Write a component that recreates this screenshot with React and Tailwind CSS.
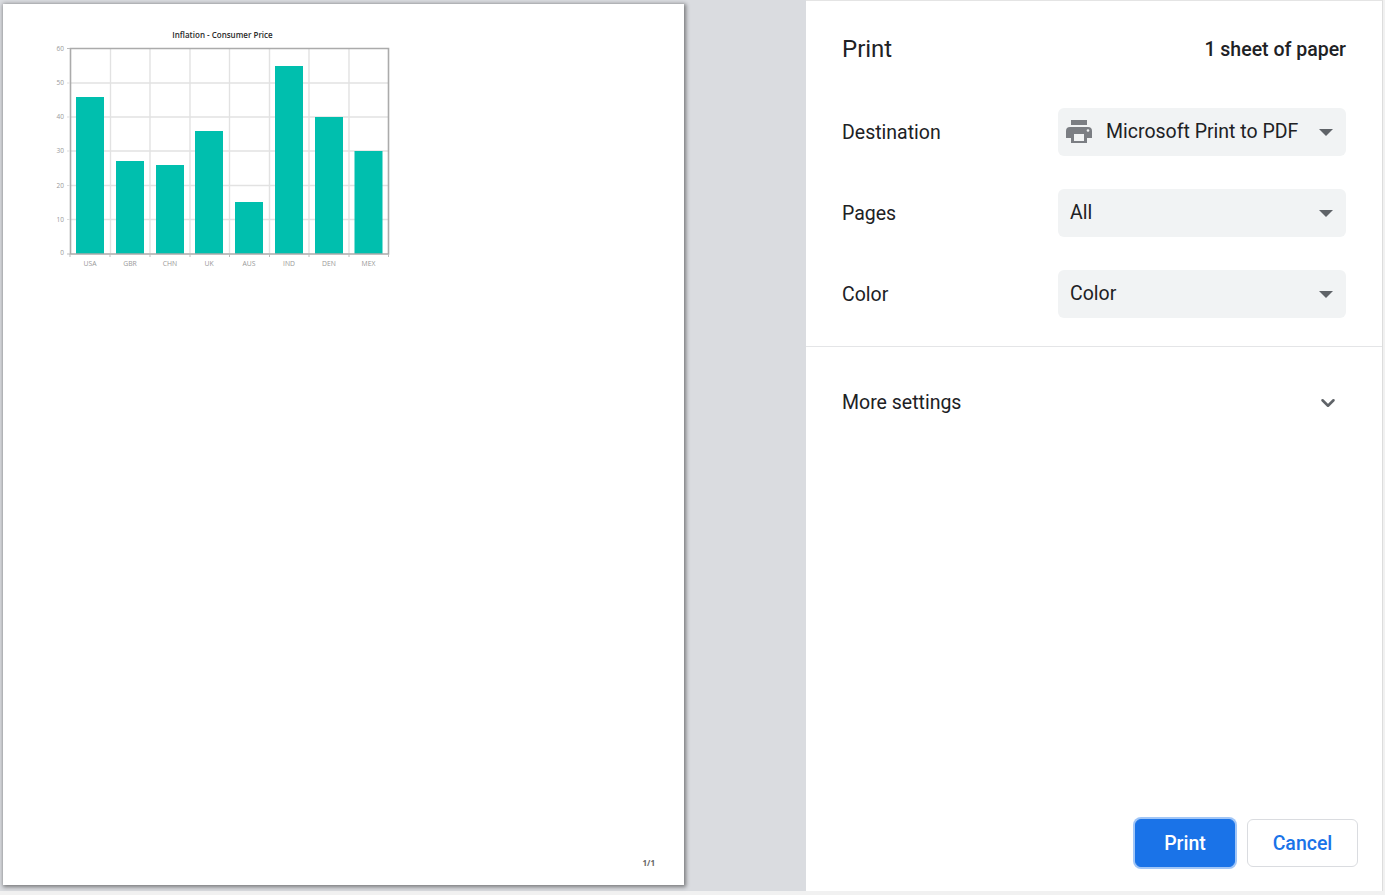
import { ChevronDown } from "lucide-react";

const bars = [
  { label: "USA", x: 76, top: 97 },
  { label: "GBR", x: 116, top: 161 },
  { label: "CHN", x: 156, top: 165 },
  { label: "UK", x: 195, top: 131 },
  { label: "AUS", x: 235, top: 202 },
  { label: "IND", x: 275, top: 66 },
  { label: "DEN", x: 315, top: 117 },
  { label: "MEX", x: 354.5, top: 151 },
];
const gridX = [110.5, 150, 190, 229.5, 269.5, 309, 349];
const gridY = [
  { v: 50, y: 83 },
  { v: 40, y: 117 },
  { v: 30, y: 151 },
  { v: 20, y: 185.5 },
  { v: 10, y: 219.5 },
];
const ticksX = [70, 110, 150, 190, 229.5, 269.5, 309, 349, 388.5];

const Chart = () => (
  <svg
    viewBox="40 20 360 260"
    width="360"
    height="260"
    className="ml-[37px] mt-[16px] block"
    style={{ fontFamily: '"Open Sans", sans-serif' }}
  >
    <text x="222.5" y="38" textAnchor="middle" fontSize="8" fontWeight="600" fill="#2a2a2a">
      Inflation - Consumer Price
    </text>
    {gridX.map((x) => (
      <line key={x} x1={x} x2={x} y1="48" y2="253" stroke="#e2e2e2" strokeWidth="1.4" />
    ))}
    {gridY.map((g) => (
      <line key={g.v} x1="70" x2="388" y1={g.y} y2={g.y} stroke="#e2e2e2" strokeWidth="1.4" />
    ))}
    {bars.map((b) => (
      <rect key={b.label} x={b.x} y={b.top} width="28" height={254 - b.top} fill="#00bfae" />
    ))}
    <path d="M70.500 48.500H388.500V254H70.500Z" fill="none" stroke="#ababab" strokeWidth="1.600" />
    <path d="M67 48.500H70M67 254H70" stroke="#bbb" />
    {gridY.map((g) => (
      <line key={g.v} x1="67" x2="70" y1={g.y} y2={g.y} stroke="#ddd" />
    ))}
    {ticksX.map((x) => (
      <line key={x} x1={x} x2={x} y1="254" y2="257" stroke="#bbb" />
    ))}
    {[{ v: 60, y: 48.5 }, ...gridY, { v: 0, y: 253 }].map((g) => (
      <text key={g.v} x="64" y={g.y + 2} textAnchor="end" fontSize="6.500" fill="#999">
        {g.v}
      </text>
    ))}
    {bars.map((b) => (
      <text key={b.label} x={b.x + 14} y="266" textAnchor="middle" fontSize="6.800" fill="#999">
        {b.label}
      </text>
    ))}
  </svg>
);

const PrinterIcon = () => (
  <svg viewBox="0 0 26 24" className="w-[26px] h-[24px] shrink-0" fill="#7b7e83">
    <path d="M5 0h16v5H5z" />
    <path d="M4 7h18a4 4 0 0 1 4 4v7h-5v5H5v-5H0v-7a4 4 0 0 1 4-4z" />
    <path d="M8 14h10v7H8z" fill="#f1f3f4" />
    <circle cx="22" cy="10.500" r="1.300" fill="#f1f3f4" />
  </svg>
);

const Caret = () => <div className="w-0 h-0 border-x-[7.500px] border-x-transparent border-t-[7.500px] border-t-[#5f6368]" />;

const SettingRow = ({ label, value, icon }) => (
  <div className="flex items-center justify-between h-[48px] mb-[33px]">
    <span className="text-[19.500px] text-[#202124] pt-[1px]">{label}</span>
    <div className={`w-[288px] h-[48px] rounded-[6px] bg-[#f1f3f4] flex items-center justify-between pr-[12px] ${icon ? "pl-[8px]" : "pl-[12px]"}`}>
      <div className="flex items-center gap-[14px]">
        {icon && <PrinterIcon />}
        <span className="text-[19.500px] text-[#202124] pb-[1px]">{value}</span>
      </div>
      <div className="mr-[1px]">
        <Caret />
      </div>
    </div>
  </div>
);

export default function App() {
  return (
    <div
      className="w-[1385px] h-[895px] overflow-hidden bg-[#f1f1f1] flex"
      style={{ fontFamily: "Roboto, sans-serif" }}
    >
      <div className="w-[1383px] h-[891px] flex">
        <div className="w-[806px] shrink-0 bg-[#dadce0] pt-[4px] pl-[3px]">
          <div className="w-[681px] h-[881px] bg-white shadow-[1px_1px_4px_1px_rgba(0,0,0,0.45)] flex flex-col justify-between">
            <Chart />
            <div className="self-end mr-[29px] mb-[16px] text-[8px] font-bold leading-[12px] text-[#666]" style={{ fontFamily: '"Open Sans", sans-serif' }}>
              1/1
            </div>
          </div>
        </div>
        <div className="w-[577px] bg-white border-t border-r border-t-[#e4e4e4] border-r-[#dddddd] flex flex-col">
          <div className="pl-[36px] pr-[36px] pt-[32px] flex items-center justify-between h-[63px]">
            <span className="text-[24px] text-[#202124]">Print</span>
            <span className="text-[19.500px] font-medium text-[#202124] pt-[2px]">1 sheet of paper</span>
          </div>
          <div className="pl-[36px] pr-[36px] pt-[44px]">
            <SettingRow label="Destination" value="Microsoft Print to PDF" icon />
            <SettingRow label="Pages" value="All" />
            <SettingRow label="Color" value="Color" />
          </div>
          <div className="h-px bg-[#e4e5e7] -mt-[5px]" />
          <div className="pl-[36px] pr-[43px] mt-[32px] flex items-center justify-between h-[48px]">
            <span className="text-[19.500px] text-[#202124]">More settings</span>
            <ChevronDown className="w-[22px] h-[22px] -mt-[1px] text-[#5f6368]" strokeWidth={2.8} />
          </div>
          <div className="mt-auto flex justify-end gap-[12px] pr-[24px] pb-[24px]">
            <button className="w-[100px] h-[48px] pt-[1px] rounded-[6px] bg-[#1a73e8] text-white text-[19.500px] font-medium ring-2 ring-[#a1c6f7] border border-[#1a73e8]">
              Print
            </button>
            <button className="w-[111px] h-[48px] pt-[1px] rounded-[6px] bg-white text-[#1a73e8] text-[19.500px] font-medium border border-[#dadce0]">
              Cancel
            </button>
          </div>
        </div>
      </div>
    </div>
  );
}
